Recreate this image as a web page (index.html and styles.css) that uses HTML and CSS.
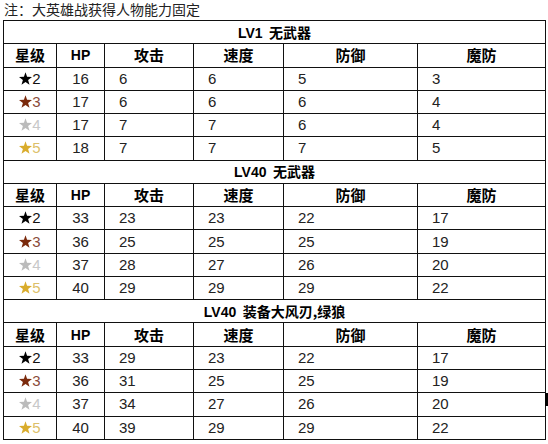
FILE: index.html
```html
<!DOCTYPE html>
<html lang="zh">
<head>
<meta charset="utf-8">
<link rel="stylesheet" href="styles.css">
</head>
<body>
<svg width="0" height="0" class="defs" aria-hidden="true">
<defs>
<symbol id="star" viewBox="0 0 24 23">
<polygon points="12,0 14.9,8.4 24,8.6 16.8,14.1 19.4,23 12,17.8 4.6,23 7.2,14.1 0,8.6 9.1,8.4"/>
</symbol>
</defs>
</svg>
<div class="note">注：大英雄战获得人物能力固定</div>
<table class="stats">
<colgroup>
<col class="c1"><col class="c2"><col class="c3"><col class="c4"><col class="c5"><col class="c6">
</colgroup>
<tbody>
<tr class="title"><td colspan="6"><span class="lv">LV1</span>&nbsp; 无武器</td></tr>
<tr class="head"><td>星级</td><td class="hp">HP</td><td>攻击</td><td>速度</td><td>防御</td><td>魔防</td></tr>
<tr><td class="star s2"><svg class="st"><use href="#star"/></svg>2</td><td class="num">16</td><td>6</td><td>6</td><td>5</td><td>3</td></tr>
<tr><td class="star s3"><svg class="st"><use href="#star"/></svg>3</td><td class="num">17</td><td>6</td><td>6</td><td>6</td><td>4</td></tr>
<tr><td class="star s4"><svg class="st"><use href="#star"/></svg>4</td><td class="num">17</td><td>7</td><td>7</td><td>6</td><td>4</td></tr>
<tr><td class="star s5"><svg class="st"><use href="#star"/></svg>5</td><td class="num">18</td><td>7</td><td>7</td><td>7</td><td>5</td></tr>

<tr class="title"><td colspan="6"><span class="lv">LV40</span>&nbsp; 无武器</td></tr>
<tr class="head"><td>星级</td><td class="hp">HP</td><td>攻击</td><td>速度</td><td>防御</td><td>魔防</td></tr>
<tr><td class="star s2"><svg class="st"><use href="#star"/></svg>2</td><td class="num">33</td><td>23</td><td>23</td><td>22</td><td>17</td></tr>
<tr><td class="star s3"><svg class="st"><use href="#star"/></svg>3</td><td class="num">36</td><td>25</td><td>25</td><td>25</td><td>19</td></tr>
<tr><td class="star s4"><svg class="st"><use href="#star"/></svg>4</td><td class="num">37</td><td>28</td><td>27</td><td>26</td><td>20</td></tr>
<tr><td class="star s5"><svg class="st"><use href="#star"/></svg>5</td><td class="num">40</td><td>29</td><td>29</td><td>29</td><td>22</td></tr>

<tr class="title"><td colspan="6"><span class="lv">LV40</span>&nbsp; 装备大风刃,绿狼</td></tr>
<tr class="head"><td>星级</td><td class="hp">HP</td><td>攻击</td><td>速度</td><td>防御</td><td>魔防</td></tr>
<tr><td class="star s2"><svg class="st"><use href="#star"/></svg>2</td><td class="num">33</td><td>29</td><td>23</td><td>22</td><td>17</td></tr>
<tr><td class="star s3"><svg class="st"><use href="#star"/></svg>3</td><td class="num">36</td><td>31</td><td>25</td><td>25</td><td>19</td></tr>
<tr><td class="star s4"><svg class="st"><use href="#star"/></svg>4</td><td class="num">37</td><td>34</td><td>27</td><td>26</td><td>20</td></tr>
<tr><td class="star s5"><svg class="st"><use href="#star"/></svg>5</td><td class="num">40</td><td>39</td><td>29</td><td>29</td><td>22</td></tr>
</tbody>
</table>
<div class="mark"></div>
</body>
</html>
```
FILE: styles.css
```css
html, body {
  margin: 0;
  padding: 0;
  background: #fff;
}
body {
  position: relative;
  width: 548px;
  height: 444px;
  overflow: hidden;
  font-family: "Liberation Sans", "Noto Sans CJK SC", sans-serif;
  color: #222;
}
.defs {
  position: absolute;
  width: 0;
  height: 0;
}
.note {
  height: 20px;
  line-height: 19px;
  padding-left: 4px;
  font-family: "Noto Sans CJK SC", sans-serif;
  font-size: 14px;
  color: #222;
}
.stats {
  margin-left: 3px;
  width: 542px;
  table-layout: fixed;
  border-collapse: collapse;
  font-size: 15px;
}
.c1 { width: 53px; }
.c2 { width: 48px; }
.c3 { width: 89px; }
.c4 { width: 90px; }
.c5 { width: 134px; }
.c6 { width: 128px; }
.stats td {
  border: 1px solid #111;
  height: 22.28px;
  padding: 0 0 0 14px;
  line-height: 20px;
  white-space: nowrap;
  vertical-align: middle;
}
.stats tr.title td {
  text-align: center;
  padding: 0;
  font-weight: bold;
  font-size: 14px;
  color: #000;
  font-family: "Noto Sans CJK SC", sans-serif;
}
.lv {
  font-family: "Liberation Sans", sans-serif;
}
.stats tr.head td {
  text-align: center;
  padding: 0;
  font-weight: bold;
  font-size: 15px;
  color: #000;
  font-family: "Noto Sans CJK SC", sans-serif;
}
.stats tr.head td.hp {
  font-family: "Liberation Sans", sans-serif;
  font-size: 14px;
}
.stats td.star,
.stats td.num {
  text-align: center;
  padding: 0;
}
.st {
  width: 13px;
  height: 13px;
  vertical-align: -1px;
  margin-right: 0;
}
.s2 { color: #111; }
.s2 .st { fill: #000; }
.s3 { color: #8a4a3a; }
.s3 .st { fill: #7b2a0c; }
.s4 { color: #c8c8c8; }
.s4 .st { fill: #bbb; }
.s5 { color: #dcbf6a; }
.s5 .st { fill: #d9ac2c; }
.mark {
  position: absolute;
  left: 545px;
  top: 393px;
  width: 3px;
  height: 13px;
  background: #000;
}
```
